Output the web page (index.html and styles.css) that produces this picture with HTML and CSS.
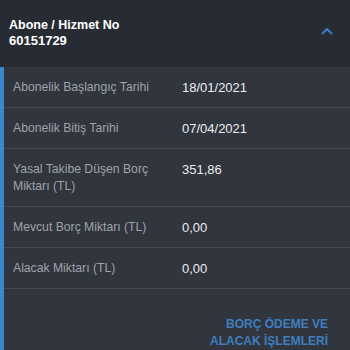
FILE: index.html
```html
<!DOCTYPE html>
<html lang="tr">
<head>
<meta charset="utf-8">
<link rel="stylesheet" href="styles.css">
</head>
<body>
<div class="header">
  <div class="title">
    <div>Abone / Hizmet No</div>
    <div>60151729</div>
  </div>
  <svg class="chevron" width="12" height="8" viewBox="0 0 12 8"><path d="M1.5 6.5 L6 2 L10.5 6.5" fill="none" stroke="#3d7fc0" stroke-width="2" stroke-linecap="round" stroke-linejoin="round"/></svg>
</div>
<div class="content">
  <div class="row"><div class="label">Abonelik Başlangıç Tarihi</div><div class="value">18/01/2021</div></div>
  <div class="row"><div class="label">Abonelik Bitiş Tarihi</div><div class="value">07/04/2021</div></div>
  <div class="row"><div class="label">Yasal Takibe Düşen Borç Miktarı (TL)</div><div class="value">351,86</div></div>
  <div class="row"><div class="label">Mevcut Borç Miktarı (TL)</div><div class="value">0,00</div></div>
  <div class="row"><div class="label">Alacak Miktarı (TL)</div><div class="value">0,00</div></div>
  <div class="actions"><div class="action">BORÇ ÖDEME VE<br>ALACAK İŞLEMLERİ</div></div>
</div>
</body>
</html>
```
FILE: styles.css
```css
html, body {
  margin: 0;
  padding: 0;
  background: #31353e;
  font-family: "Liberation Sans", Arial, sans-serif;
}
.header {
  height: 67px;
  box-sizing: border-box;
  background: #272b33;
  padding: 17px 17px 0 9px;
  display: flex;
  justify-content: space-between;
  align-items: flex-start;
}
.title {
  color: #ffffff;
  font-weight: bold;
  font-size: 12.5px;
  line-height: 16px;
}
.title div + div {
  font-size: 13px;
}
.chevron {
  margin-top: 10px;
}
.content {
  border-left: 4px solid #3b88cc;
  min-height: 283px;
}
.row {
  display: grid;
  grid-template-columns: 169px 1fr;
  border-bottom: 1px solid #454952;
  padding: 11.5px 0 11.5px 9px;
  font-size: 13px;
  line-height: 17px;
}
.label {
  color: #9fa3aa;
  font-size: 12.2px;
  padding-right: 10px;
}
.value {
  color: #eceef0;
}
.actions {
  display: flex;
  justify-content: flex-end;
  padding: 27px 22px 0 0;
}
.action {
  color: #3f7fbd;
  font-weight: bold;
  font-size: 12px;
  line-height: 17px;
  text-align: right;
}
```
